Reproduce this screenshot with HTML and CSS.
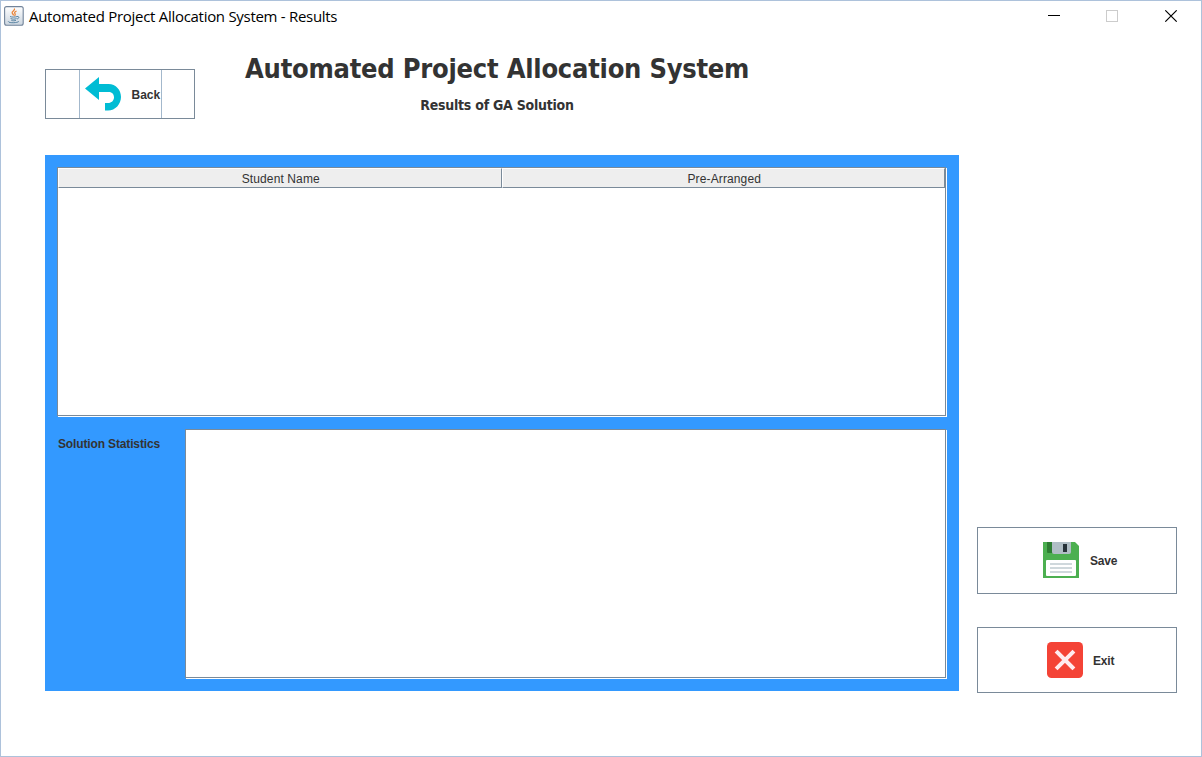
FILE: index.html
```html
<!DOCTYPE html>
<html lang="en">
<head>
<meta charset="utf-8">
<title>Automated Project Allocation System - Results</title>
<link rel="stylesheet" href="styles.css">
</head>
<body>
<div class="window">
  <header class="titlebar">
    <svg class="java-icon" width="20" height="20" viewBox="0 0 20 20">
      <defs><linearGradient id="tile" x2="0" y2="1"><stop offset="0" stop-color="#fff"/><stop offset="1" stop-color="#cbd5df"/></linearGradient></defs>
      <rect x=".6" y=".6" width="18.6" height="18.6" rx="2" fill="url(#tile)" stroke="#72849a" stroke-width="1.1"/>
      <path d="M10.4 2.5c1.2 2-3.2 2.8-2.2 4.6.4.9 1.3 1.4 1.3 2.4M12.6 5c-3 1.200-1.800 2.200-1.400 3.200.2.6-.2 1.200-.8 1.600" fill="none" stroke="#ea8438" stroke-width="1.300"/>
      <path d="M6 10.500c2 .8 5 .7 7 .1M6.600 12.500c2 .9 4 .8 6 .1M7.300 14.300c1.500.6 3.200.6 4.700 0M4.500 15.200c-1.200 2 8.800 2 10.300.2M13 10.500c2.600-.5 2.400 2 0 2.500" fill="none" stroke="#527e9e" stroke-width=".95"/>
    </svg>
    <span class="caption">Automated Project Allocation System - Results</span>
    <svg class="controls" width="130" height="12" viewBox="0 0 130 12" fill="none" shape-rendering="crispEdges">
      <path d="M0 5.500h12" stroke="#000"/>
      <rect x="58.500" y=".5" width="11" height="11" stroke="#ccc"/>
      <path d="M117.300.3l11.400 11.400M128.700.3l-11.400 11.400" stroke="#000" stroke-width="1.100" shape-rendering="auto"/>
    </svg>
  </header>
  <main class="content">
    <section class="main-column">
      <div class="heading">
        <button class="button back">
          <span class="back-inner">
            <svg class="back-icon" width="36" height="34" viewBox="0 0 36 34"><path d="M0 11.500L14 0v7h9.500C31 7 36 13 36 20s-5.500 13.500-13 13.500h-3V26h3c3.500 0 6-2.500 6-5.800S26.500 15 23.500 15H14v8z" fill="#00bcd4"/></svg>
            <span class="back-label">Back</span>
          </span>
        </button>
        <div class="titles">
          <h1>Automated Project Allocation System</h1>
          <h2>Results of GA Solution</h2>
        </div>
      </div>
      <div class="panel">
        <div class="pane table">
          <div class="columns">
            <div class="column">Student Name</div>
            <div class="column">Pre-Arranged</div>
          </div>
        </div>
        <div class="stats">
          <span class="stats-label">Solution Statistics</span>
          <div class="pane stats-text"></div>
        </div>
      </div>
    </section>
    <aside class="actions">
      <button class="button save">
        <svg class="save-icon" width="36" height="36" viewBox="0 0 36 36">
          <path d="M0 0h32l4 4v32H0z" fill="#4caf50"/>
          <path d="M4 0h6v11H5q-1 0-1-1z" fill="#2e7d32"/>
          <path d="M9 0h19v10q0 2-2 2H11q-2 0-2-2z" fill="#b0bec5"/>
          <path d="M20 2h4v8h-4z" fill="#263238"/>
          <rect x="3" y="18" width="30" height="16" rx="1" fill="#fff"/>
          <path d="M7 21h22v2H7zM7 25h22v2H7zM7 29h22v2H7z" fill="#cfd8dc"/>
        </svg>
        <span class="save-label">Save</span>
      </button>
      <button class="button exit">
        <svg width="36" height="36" viewBox="0 0 36 36">
          <rect width="36" height="36" rx="4.500" fill="#f44336"/>
          <path d="M10.500 10.500l15 15M25.500 10.500l-15 15" stroke="#ffebee" stroke-width="4" stroke-linecap="square"/>
        </svg>
        <span class="exit-label">Exit</span>
      </button>
    </aside>
  </main>
</div>
</body>
</html>
```
FILE: styles.css
```css
* { box-sizing: border-box; }
body { margin: 0; background: #fff; font-family: "Liberation Sans", Arial, sans-serif; color: #333; }
.window { width: 1202px; height: 757px; border: 1px solid #adc2db; overflow: hidden; background: #fff; }
.titlebar { height: 31px; display: flex; align-items: flex-start; padding: 5px 23px 0 3px; }
.java-icon { flex: none; }
.caption { margin-left: 5px; font: 15px/20px "Open Sans", "Noto Sans", sans-serif; letter-spacing: -0.29px; color: #000; white-space: nowrap; }
.controls { margin: 4px 0 0 auto; }
.content { display: flex; padding-left: 44px; gap: 18px; }
.main-column { width: 914px; }
.heading { display: flex; height: 123px; }
.button { display: flex; align-items: center; padding: 0; margin: 0; background: #fff; border: 1px solid #7a8a99; border-radius: 0; font: bold 12px/14px "Liberation Sans", Arial, sans-serif; color: #333; }
.back { width: 150px; height: 50px; margin-top: 37px; justify-content: center; }
.back-inner { display: flex; align-items: center; width: 83px; height: 48px; border: solid #a3b8cc; border-width: 0 1px; padding-left: 5px; }
.back-icon { margin-bottom: 1px; }
.back-label { margin: 1px 0 0 11px; }
.titles { width: 504px; margin: 19px 0 0 50px; text-align: center; white-space: nowrap; }
h1, h2 { margin: 0; font-family: "DejaVu Sans Condensed", "DejaVu Sans", sans-serif; font-stretch: condensed; font-weight: bold; }
h1 { font-size: 27px; line-height: 36px; letter-spacing: -0.23px; }
h2 { font-size: 14px; line-height: 20px; margin-top: 8px; letter-spacing: -0.25px; }
.panel { height: 536px; background: #39f; padding: 12px; display: flex; flex-direction: column; gap: 12px; }
.pane { background: #fff; border: 1px solid #7a8a99; box-shadow: 1px 1px 0 #fff; }
.table { width: 889px; height: 249px; margin-bottom: 1px; }
.columns { display: flex; height: 20px; }
.column { flex: 1; padding-left: 2px; background: #eee; border: 1px solid #fff; border-right-color: #7a8a99; border-bottom-color: #7a8a99; font-size: 12px; line-height: 20px; text-align: center; letter-spacing: 0.12px; }
.stats { display: flex; }
.stats-label { width: 128px; padding: 8px 0 0 1px; font-weight: bold; font-size: 12px; line-height: 14px; letter-spacing: -0.14px; white-space: nowrap; }
.stats-text { width: 761px; height: 249px; }
.actions { width: 200px; padding-top: 495px; display: flex; flex-direction: column; gap: 33px; }
.save { width: 200px; height: 67px; padding-left: 65px; }
.save-icon { margin-bottom: 1px; }
.exit { width: 200px; height: 66px; padding-left: 69px; }
.save-label { margin-left: 11px; letter-spacing: -0.2px; }
.exit-label { margin: 2px 0 0 10px; letter-spacing: -0.2px; }
```
